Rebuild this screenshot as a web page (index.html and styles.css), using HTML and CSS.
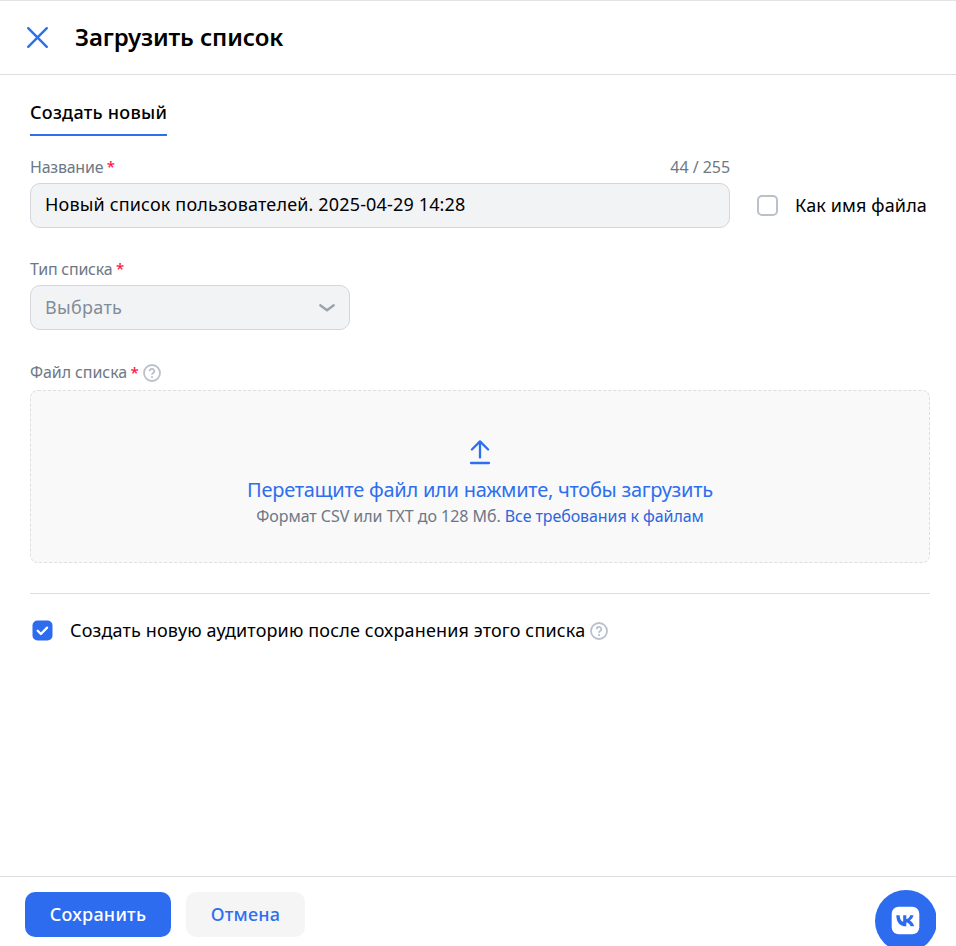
FILE: index.html
```html
<!DOCTYPE html>
<html lang="ru">
<head>
<meta charset="utf-8">
<title>Загрузить список</title>
<link rel="stylesheet" href="styles.css">
</head>
<body>
<div class="modal">
  <header class="header">
    <svg class="close" viewBox="0 0 23 23"><path d="M2.200 2.200l18.600 18.600M20.800 2.200L2.200 20.800"/></svg>
    <h1 class="title">Загрузить список</h1>
  </header>
  <main class="content">
    <div class="tab">Создать новый</div>
    <div class="name-row">
      <div class="name-field">
        <div class="label"><span class="label-text">Название</span><b class="req">*</b><span class="counter">44 / 255</span></div>
        <div class="input">Новый список пользователей. 2025-04-29 14:28</div>
      </div>
      <label class="as-file"><i class="box"></i><span>Как имя файла</span></label>
    </div>
    <div class="type-field">
      <div class="label"><span class="label-text">Тип списка</span><b class="req">*</b></div>
      <div class="input select"><span class="placeholder">Выбрать</span>
        <svg class="chevron" viewBox="0 0 16 8"><path d="M1.300 1.300L8 6.200l6.700-4.900"/></svg>
      </div>
    </div>
    <div class="file-field">
      <div class="label"><span class="label-text wide">Файл списка</span><b class="req">*</b>
        <svg class="help" viewBox="0 0 18 18"><circle cx="9" cy="9" r="8"/><path d="M6.700 7.200a2.300 2.200 0 1 1 3.500 1.800q-1.200.7-1.200 1.800"/><circle class="dot" cx="9" cy="13" r="1.100"/></svg>
      </div>
      <div class="drop">
        <svg class="upload" viewBox="0 0 22 26"><path d="M11 18.500V3M2.900 10.500L11 2.400l8.100 8.100M2 24h18"/></svg>
        <div class="drop-title">Перетащите файл или нажмите, чтобы загрузить</div>
        <div class="drop-hint"><span>Формат CSV или TXT до 128 Мб.</span><span class="link">Все требования к файлам</span></div>
      </div>
    </div>
    <div class="audience">
      <svg class="checked" viewBox="0 0 21 21"><rect x=".5" y=".5" width="20" height="20" rx="5"/><path d="M5.700 10.800l3.200 3.200 6.200-6.400"/></svg>
      <span class="audience-text">Создать новую аудиторию после сохранения этого списка</span>
      <svg class="help" viewBox="0 0 18 18"><circle cx="9" cy="9" r="8"/><path d="M6.700 7.200a2.300 2.200 0 1 1 3.500 1.800q-1.200.7-1.200 1.800"/><circle class="dot" cx="9" cy="13" r="1.100"/></svg>
    </div>
  </main>
  <footer class="footer">
    <button class="btn save">Сохранить</button>
    <button class="btn cancel">Отмена</button>
    <svg class="vk" viewBox="0 0 61 56"><circle cx="31" cy="31" r="31"/><rect x="16.700" y="16.700" width="27.600" height="27.600" rx="7"/><path d="M21.300 25.200h3.300c.2 4.100 1.900 6.200 3.600 6.600v-6.600h3.100v3.900c1.700-.2 3.300-1.800 3.900-3.900h3.300c-.5 2.400-2.200 4.300-3.600 5.200 1.400.7 3.400 2.400 4.200 5.900h-3.500c-.7-2.200-2.300-3.600-4.300-3.800v3.800h-.6c-5.700 0-9.200-4-9.400-11.100z"/></svg>
  </footer>
</div>
</body>
</html>
```
FILE: styles.css
```css
* { box-sizing: border-box; }
body { margin: 0; font-family: "Noto Sans", "Open Sans", sans-serif; color: #000; background: #fff; }
.modal { height: 946px; display: flex; flex-direction: column; overflow: hidden; }
.header { height: 75px; flex: none; border-top: 1px solid #e1e3e6; border-bottom: 1px solid #dcdee1; display: flex; align-items: center; padding: 0 0 1px 26px; gap: 26px; }
.close { width: 23px; height: 23px; fill: none; stroke: #2d6fee; stroke-width: 2.4; stroke-linecap: round; }
.title { margin: 0; padding-bottom: 1px; font-size: 24px; line-height: 32px; font-weight: 600; letter-spacing: -.12px; }
.content { flex: 1; padding: 21px 26px 0 30px; min-height: 0; }
.tab { width: 137px; height: 40px; border-bottom: 2px solid #2d6fee; font-size: 18px; line-height: 32px; font-weight: 500; letter-spacing: .26px; white-space: nowrap; }
.label { display: flex; align-items: center; height: 20px; font-size: 16px; line-height: 20px; color: #6d7885; white-space: nowrap; }
.label-text { letter-spacing: -.23px; }
.label-text.wide { letter-spacing: -.08px; padding-bottom: 2px; }
.req { color: #ff1744; font-size: 15px; font-weight: 500; margin-left: 3.500px; padding-bottom: 2px; }
.counter { margin-left: auto; letter-spacing: -.05px; }
.name-row { display: flex; gap: 27px; margin-top: 21px; }
.name-field { width: 700px; }
.input { height: 45px; margin-top: 6px; border: 1px solid #d3d6da; border-radius: 10px; background: #f2f3f5; padding: 0 14px; font-size: 18px; line-height: 41px; letter-spacing: .155px; white-space: nowrap; }
.as-file { display: flex; align-items: center; height: 45px; margin-top: 25px; gap: 17px; font-size: 18px; letter-spacing: .12px; white-space: nowrap; }
.box { width: 21px; height: 21px; margin-top: 2px; border: 2px solid #b8c1cc; border-radius: 5px; }
.type-field { width: 320px; margin-top: 31px; }
.select { display: flex; justify-content: space-between; align-items: center; }
.placeholder { color: #818c99; letter-spacing: .3px; }
.chevron { width: 16px; height: 8px; margin-top: 1px; fill: none; stroke: #99a2ad; stroke-width: 2.3; stroke-linecap: round; stroke-linejoin: round; }
.file-field { margin-top: 33px; width: 900px; }
.help { width: 18px; height: 18px; margin-left: 5px; fill: none; stroke: #b8c1cc; stroke-width: 1.8; }
.label .help { margin-left: 4px; }
.help .dot { fill: #b8c1cc; stroke: none; }
.drop { height: 173px; margin-top: 7px; border: 1px dashed #dcdee1; border-radius: 8px; background: #f9f9f9; display: flex; flex-direction: column; align-items: center; padding-top: 48px; }
.upload { width: 22px; height: 26px; fill: none; stroke: #2d6fee; stroke-width: 2.3; stroke-linecap: round; stroke-linejoin: round; }
.drop-title { margin-top: 10px; font-size: 20px; line-height: 30px; letter-spacing: -.26px; color: #2d6fee; white-space: nowrap; }
.drop-hint { font-size: 16px; line-height: 22px; letter-spacing: -.04px; color: #6d7885; display: flex; gap: 4px; white-space: nowrap; }
.link { color: #2d66de; letter-spacing: -.09px; }
.audience { width: 900px; height: 48px; margin-top: 30px; border-top: 1px solid #dcdee1; padding: 27px 0 0 2px; display: flex; align-items: center; font-size: 18px; line-height: 20px; white-space: nowrap; }
.audience-text { padding-bottom: 3px; letter-spacing: .145px; }
.checked { width: 21px; height: 21px; margin: -1px 17px 0 0; fill: #2d6bef; }
.checked path { fill: none; stroke: #fff; stroke-width: 2.3; stroke-linecap: round; stroke-linejoin: round; }
.footer { height: 70px; flex: none; border-top: 1px solid #dcdee1; display: flex; padding: 15px 20px 0 25px; gap: 15px; }
.btn { height: 45px; border: 0; border-radius: 10px; font: 500 18px/45px "Noto Sans", sans-serif; letter-spacing: .25px; padding: 0; white-space: nowrap; }
.save { width: 146px; background: #2d6bef; color: #fff; }
.cancel { width: 119px; background: #f5f5f5; color: #2d6fee; }
.vk { width: 61px; height: 56px; margin: -2px 0 0 auto; flex: none; fill: #2d6bef; }
.vk rect { fill: #fff; }
```
